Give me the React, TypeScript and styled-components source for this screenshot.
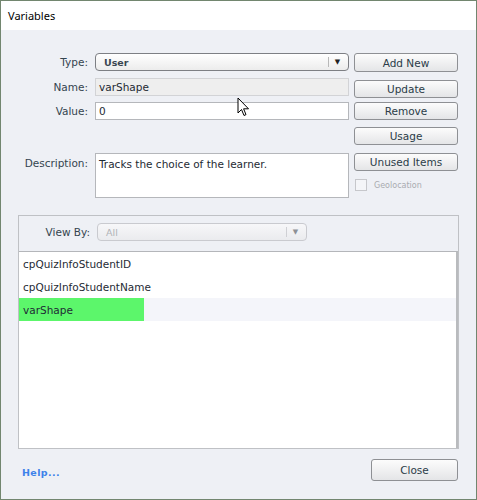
import React from 'react';
import styled, { createGlobalStyle } from 'styled-components';

const colors = {
    frame: '#72866f',
    body: '#eef0f5',
    label: '#34444f',
    border: '#8e9094',
    light: '#c4c6cb',
    help: '#3d82ea',
    green: '#5cf66b'
};

const GlobalStyle = createGlobalStyle`
    html, body {
        margin: 0;
        padding: 0;
        background: #ffffff;
    }
    * {
        box-sizing: border-box;
    }
`;

const Window = styled.div`
    position: relative;
    width: 477px;
    height: 500px;
    border: 1px solid ${colors.frame};
    display: flex;
    flex-direction: column;
    font-family: 'DejaVu Sans', sans-serif;
    font-size: 10px;
    color: ${colors.label};
`;

const TitleBar = styled.div`
    height: 29px;
    background: #ffffff;
    padding-left: 7px;
    display: flex;
    align-items: center;
    font-family: 'Noto Sans', sans-serif;
    font-size: 11px;
    color: #000;
`;

const Body = styled.div`
    flex: 1;
    background: ${colors.body};
    padding: 23px 18px 0 17px;
    display: flex;
    flex-direction: column;
`;

const FormArea = styled.div`
    display: flex;
    gap: 5px;
`;

const Fields = styled.div`
    display: grid;
    grid-template-columns: 70px 254px;
    column-gap: 7px;
    align-content: start;
`;

const Label = styled.div<{ $top?: number; $height?: number }>`
    margin-top: ${p => p.$top ?? 0}px;
    height: ${p => p.$height ?? 18}px;
    display: flex;
    justify-content: flex-end;
    align-items: ${p => ((p.$height ?? 18) > 20 ? 'flex-start' : 'center')};
    padding-top: ${p => ((p.$height ?? 18) > 20 ? 4 : 0)}px;
    font-size: 10.5px;
    color: ${colors.label};
`;

const Input = styled.div<{ $top?: number; $height?: number; $disabled?: boolean }>`
    margin-top: ${p => p.$top ?? 0}px;
    height: ${p => p.$height ?? 18}px;
    border: 1px solid ${p => (p.$disabled ? '#d2d3d6' : '#b5b7bb')};
    background: ${p => (p.$disabled ? '#eeeeee' : '#ffffff')};
    padding: ${p => ((p.$height ?? 18) > 20 ? '4px 3px' : '0 3px')};
    display: flex;
    align-items: ${p => ((p.$height ?? 18) > 20 ? 'flex-start' : 'center')};
    font-size: 10.5px;
    color: #1e2a33;
`;

const Select = styled.div<{ $disabled?: boolean; $width?: number }>`
    width: ${p => (p.$width ? `${p.$width}px` : 'auto')};
    height: 18px;
    border: 1px solid ${p => (p.$disabled ? '#c9cacf' : '#7d7f84')};
    border-radius: 4px;
    background: ${p =>
        p.$disabled
            ? 'linear-gradient(#f7f7f9, #eaebee)'
            : 'linear-gradient(#ffffff, #ececec)'};
    display: flex;
    align-items: center;
    padding-left: 8px;
    font-size: 9.5px;
    font-weight: ${p => (p.$disabled ? 'normal' : 'bold')};
    color: ${p => (p.$disabled ? '#b0b2b6' : '#3a4650')};
`;

const SelectText = styled.span`
    flex: 1;
`;

const SelectArrow = styled.span<{ $disabled?: boolean }>`
    width: 18px;
    height: 10px;
    border-left: 1px solid ${p => (p.$disabled ? '#cfd0d4' : '#b8b8b8')};
    display: flex;
    align-items: center;
    justify-content: center;
    margin-right: 2px;
    font-size: 7px;
    color: ${p => (p.$disabled ? '#8d9096' : '#222')};
`;

const ButtonColumn = styled.div`
    display: flex;
    flex-direction: column;
    width: 104px;
`;

const Button = styled.button<{ $top?: number; $height?: number; $width?: number }>`
    margin-top: ${p => p.$top ?? 0}px;
    height: ${p => p.$height ?? 18}px;
    width: ${p => (p.$width ? `${p.$width}px` : '100%')};
    border: 1px solid ${colors.border};
    border-radius: 3px;
    background: linear-gradient(#fcfcfc, #e4e5e7);
    font-family: 'DejaVu Sans', sans-serif;
    font-size: 10.5px;
    color: #2b3c48;
    padding: 0;
    display: flex;
    align-items: center;
    justify-content: center;
`;

const CheckRow = styled.div`
    margin-top: 8px;
    display: flex;
    align-items: center;
    gap: 7px;
    padding-left: 1px;
    font-size: 8px;
    color: #a9abb0;
`;

const CheckBox = styled.span`
    width: 12px;
    height: 12px;
    border: 1px solid #c6c7cb;
    background: #f4f5f8;
`;

const Panel = styled.div`
    margin-top: 17px;
    width: 441px;
    height: 234px;
    border: 1px solid #bfc1c5;
    display: flex;
    flex-direction: column;
`;

const PanelHeader = styled.div`
    height: 35px;
    display: flex;
    align-items: center;
    gap: 7px;
    padding: 0 0 3px 0;
`;

const HeaderLabel = styled.div`
    width: 71px;
    text-align: right;
    font-size: 10.5px;
    color: ${colors.label};
`;

const List = styled.div`
    flex: 1;
    background: #ffffff;
    border-top: 1px solid #b4b6ba;
    border-right: 2px solid #b9bbbe;
`;

const ListRow = styled.div<{ $selected?: boolean }>`
    height: 23px;
    display: flex;
    align-items: center;
    background: ${p => (p.$selected ? '#f4f5fa' : 'transparent')};
`;

const ListCell = styled.div<{ $selected?: boolean }>`
    width: 125px;
    height: 100%;
    display: flex;
    align-items: center;
    padding-left: 4px;
    white-space: nowrap;
    background: ${p => (p.$selected ? colors.green : 'transparent')};
    font-size: 10.5px;
    color: #1f2b35;
`;

const Footer = styled.div`
    flex: 1;
    display: flex;
    align-items: center;
    justify-content: space-between;
    padding-bottom: 8px;
`;

const HelpLink = styled.a`
    margin: 4px 0 0 4px;
    font-size: 9.5px;
    font-weight: bold;
    letter-spacing: 0.4px;
    color: ${colors.help};
    text-decoration: none;
`;

const Cursor = styled.svg`
    position: absolute;
    left: 236px;
    top: 96px;
`;

const items = ['cpQuizInfoStudentID', 'cpQuizInfoStudentName', 'varShape'];

const App = () => {
    return (
        <Window>
            <GlobalStyle />
            <TitleBar>Variables</TitleBar>
            <Body>
                <FormArea>
                    <Fields>
                        <Label>Type:</Label>
                        <Select>
                            <SelectText>User</SelectText>
                            <SelectArrow>▼</SelectArrow>
                        </Select>
                        <Label $top={7}>Name:</Label>
                        <Input $top={7} $disabled>
                            varShape
                        </Input>
                        <Label $top={6}>Value:</Label>
                        <Input $top={6}>0</Input>
                        <Label $top={33} $height={45}>
                            Description:
                        </Label>
                        <Input $top={33} $height={45}>
                            Tracks the choice of the learner.
                        </Input>
                    </Fields>
                    <ButtonColumn>
                        <Button $height={19}>Add New</Button>
                        <Button $top={8}>Update</Button>
                        <Button $top={4}>Remove</Button>
                        <Button $top={7}>Usage</Button>
                        <Button $top={8}>Unused Items</Button>
                        <CheckRow>
                            <CheckBox />
                            Geolocation
                        </CheckRow>
                    </ButtonColumn>
                </FormArea>
                <Panel>
                    <PanelHeader>
                        <HeaderLabel>View By:</HeaderLabel>
                        <Select $disabled $width={210}>
                            <SelectText>All</SelectText>
                            <SelectArrow $disabled>▼</SelectArrow>
                        </Select>
                    </PanelHeader>
                    <List>
                        {items.map(item => {
                            const selected = item === 'varShape';
                            return (
                                <ListRow key={item} $selected={selected}>
                                    <ListCell $selected={selected}>{item}</ListCell>
                                </ListRow>
                            );
                        })}
                    </List>
                </Panel>
                <Footer>
                    <HelpLink href="#">Help...</HelpLink>
                    <Button $height={22} $width={87}>
                        Close
                    </Button>
                </Footer>
            </Body>
            <Cursor width="13" height="21" viewBox="0 0 13 21">
                <path
                    d="M1 1 L1 16 L4.5 12.5 L7 18.5 L9 17.6 L6.6 11.8 L11.5 11.8 Z"
                    fill="#ffffff"
                    stroke="#000000"
                    strokeWidth="1"
                    strokeLinejoin="miter"
                />
            </Cursor>
        </Window>
    );
};

export default App;
